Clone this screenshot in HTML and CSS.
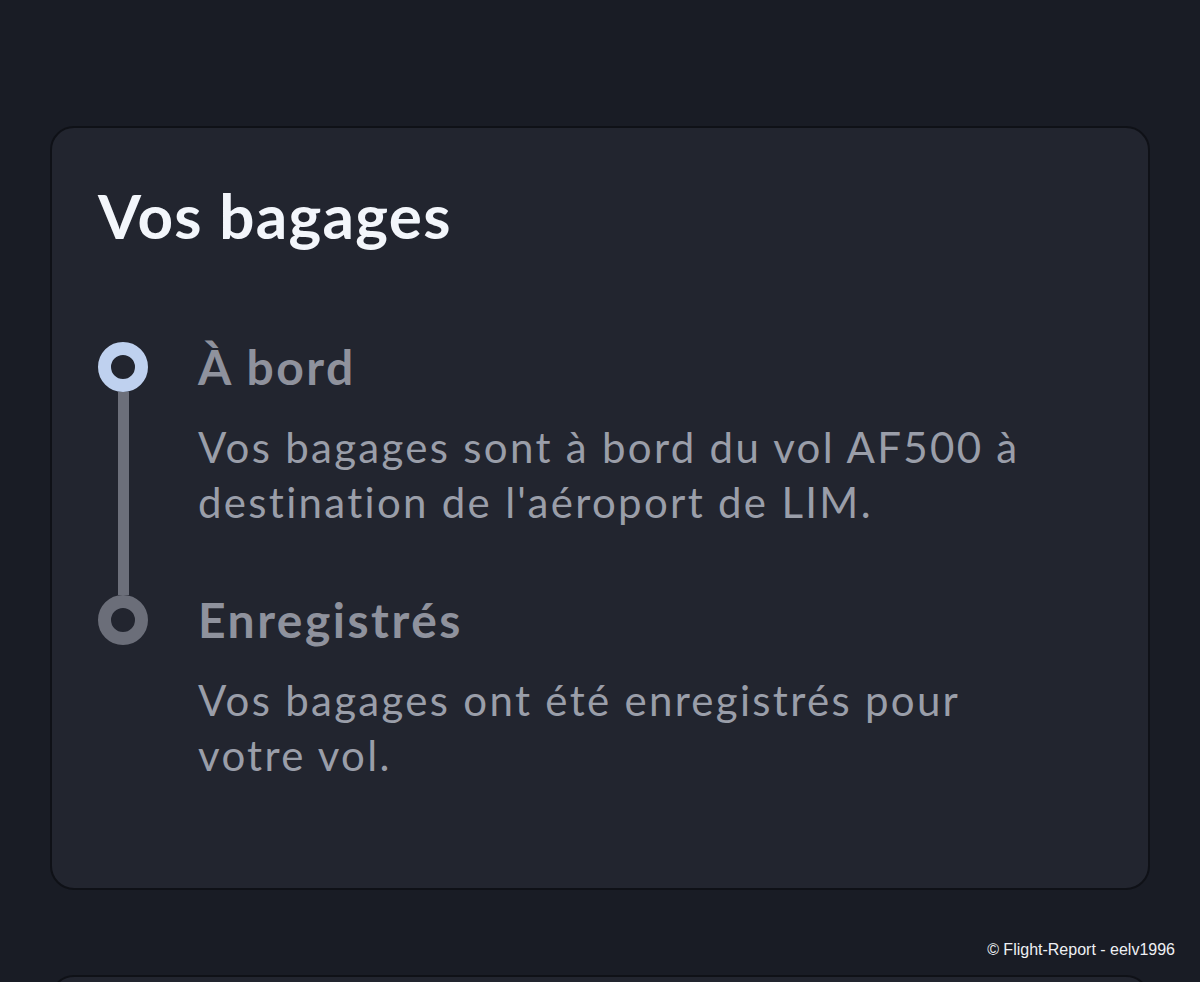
FILE: index.html
```html
<!DOCTYPE html>
<html lang="fr">
<head>
    <meta charset="UTF-8">
    <title>Vos bagages</title>
    <meta name="viewport" content="width=device-width, initial-scale=1.0">
    <link rel="stylesheet" href="styles.css">
</head>
<body>
    <div class="page">
        <div class="baggage-card">
            <h1>Vos bagages</h1>
            <div class="timeline">
                <div class="step step-active">
                    <div class="marker">
                        <span class="dot"></span>
                        <span class="line"></span>
                    </div>
                    <div class="step-body">
                        <h2>À bord</h2>
                        <p>Vos bagages sont à bord du vol AF500 à destination de l'aéroport de LIM.</p>
                    </div>
                </div>
                <div class="step">
                    <div class="marker">
                        <span class="dot"></span>
                    </div>
                    <div class="step-body">
                        <h2>Enregistrés</h2>
                        <p>Vos bagages ont été enregistrés pour votre vol.</p>
                    </div>
                </div>
            </div>
        </div>
        <div class="credit">© Flight-Report - eelv1996</div>
        <div class="next-card"></div>
    </div>
</body>
</html>
```

FILE: styles.css
```css
* {
    margin: 0;
    padding: 0;
    box-sizing: border-box;
}

body {
    background: #191c25;
    font-family: 'Lato', 'Noto Sans', sans-serif;
    font-variant-ligatures: none;
    height: 982px;
    overflow: hidden;
}

.page {
    height: 982px;
    overflow: hidden;
    padding: 126px 50px 0;
}

.baggage-card {
    background: #22252f;
    border: 2px solid #0f1117;
    border-radius: 24px;
    height: 764px;
    padding: 46px 46px 0;
}

.baggage-card h1 {
    color: #f3f6fb;
    font-size: 62px;
    font-weight: 700;
    line-height: 82px;
    letter-spacing: 1.3px;
}

.timeline {
    margin-top: 86px;
}

.step {
    display: flex;
    gap: 50px;
}

.marker {
    width: 50px;
    display: flex;
    flex-direction: column;
    align-items: center;
}

.dot {
    width: 50px;
    height: 50px;
    border-radius: 50%;
    border: 13px solid #6b6e79;
    flex-shrink: 0;
}

.step-active .dot {
    border-color: #bfd1ef;
}

.line {
    flex: 1;
    width: 11px;
    background: #6c6f7a;
}

.step-body {
    padding-bottom: 65px;
}

.step-body h2 {
    color: #8f929d;
    font-size: 48px;
    font-weight: 700;
    line-height: 50px;
    letter-spacing: 2.5px;
}

.step-body p {
    color: #9a9ea9;
    font-size: 42px;
    font-weight: 400;
    line-height: 55px;
    letter-spacing: 2.3px;
    margin-top: 28px;
    max-width: 850px;
}

.credit {
    text-align: right;
    color: #eef0f4;
    font-family: 'Liberation Sans', Arial, sans-serif;
    font-size: 16px;
    margin: 51px -25px 0 0;
    line-height: 18px;
}

.next-card {
    height: 60px;
    margin-top: 16px;
    background: #22252f;
    border: 2px solid #0f1117;
    border-radius: 24px;
}
```
